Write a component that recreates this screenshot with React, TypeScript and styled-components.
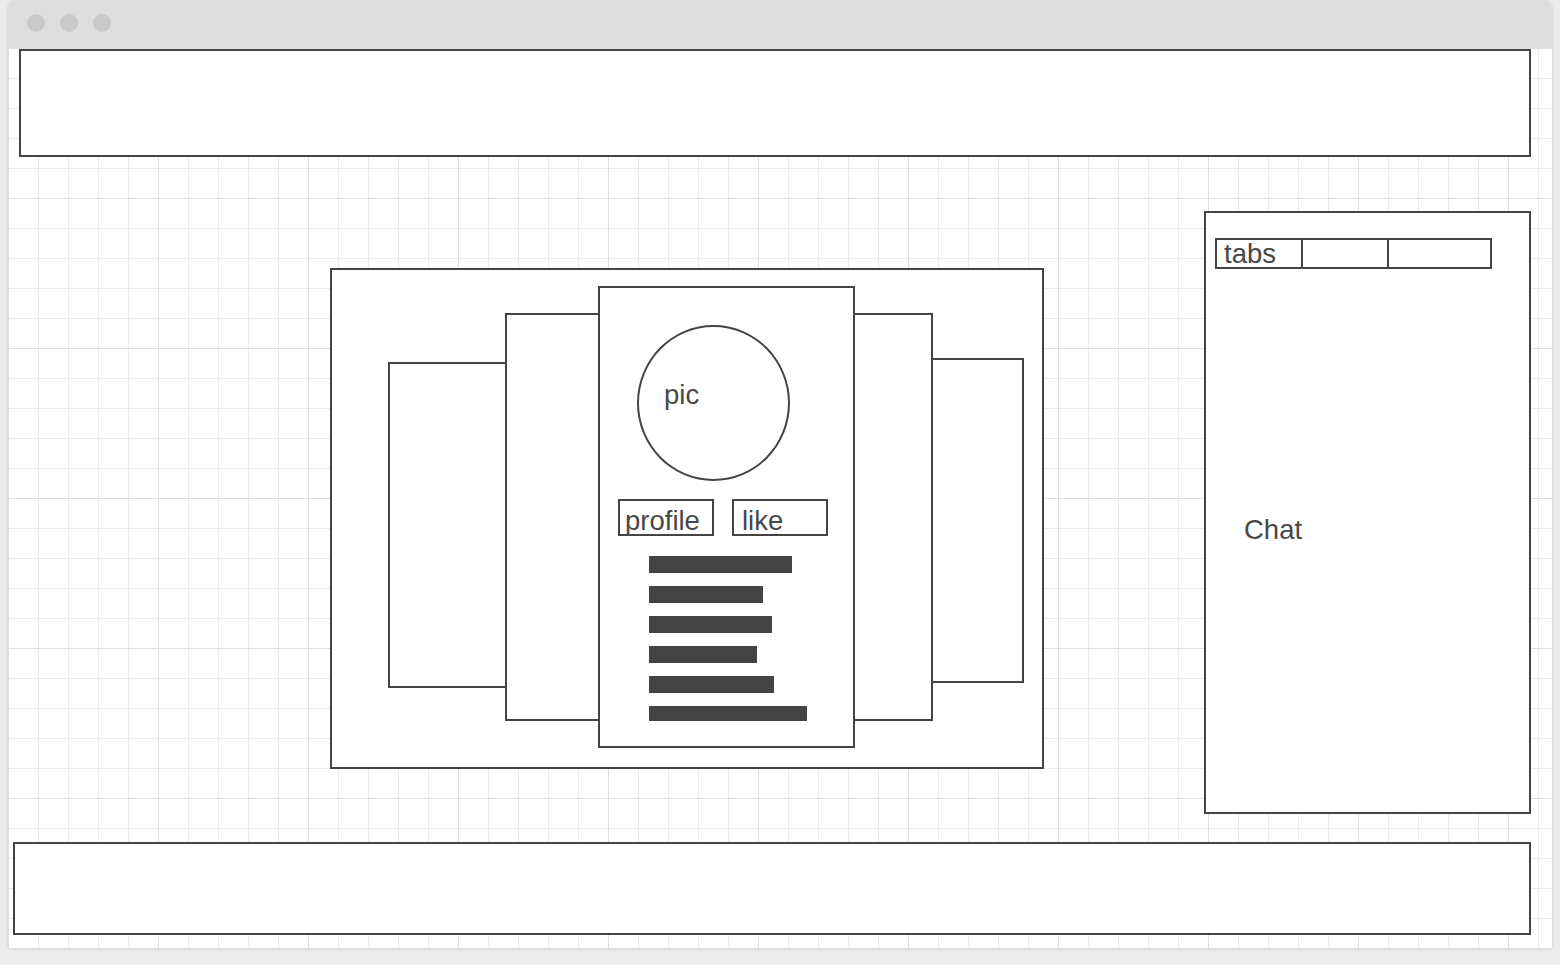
import React from "react";
import styled, { createGlobalStyle } from "styled-components";

const GlobalStyle = createGlobalStyle`
  html, body {
    margin: 0;
    padding: 0;
    background: #ececec;
    font-family: "Liberation Sans", Arial, sans-serif;
  }
  * { box-sizing: border-box; }
`;

const Page = styled.div`
  width: 1560px;
  height: 965px;
  padding-left: 8px;
  overflow: hidden;
`;

const Window = styled.div`
  width: 1544px;
  height: 949px;
  border-radius: 8px 8px 0 0;
  background: #ffffff;
  box-shadow: 0 0 3px rgba(0, 0, 0, 0.14);
  display: flex;
  flex-direction: column;
  overflow: hidden;
`;

const TitleBar = styled.div`
  height: 48px;
  flex: none;
  background: #dddddd;
  display: flex;
  align-items: center;
  gap: 15px;
  padding: 0 0 2px 19px;
`;

const Dot = styled.span`
  width: 18px;
  height: 18px;
  border-radius: 50%;
  background: #c9c9c9;
`;

const Canvas = styled.div`
  flex: 1;
  display: flex;
  flex-direction: column;
  background-color: #ffffff;
  background-image:
    linear-gradient(to right, #dedede 1px, transparent 1px),
    linear-gradient(to bottom, #dedede 1px, transparent 1px),
    linear-gradient(to right, #ebebeb 1px, transparent 1px),
    linear-gradient(to bottom, #ebebeb 1px, transparent 1px);
  background-size: 150px 150px, 150px 150px, 30px 30px, 30px 30px;
`;

const Box = styled.div`
  border: 2px solid #444444;
  background: #ffffff;
  flex: none;
`;

const Header = styled(Box)`
  width: 1512px;
  height: 108px;
  margin: 1px 0 0 11px;
`;

const Middle = styled.div`
  height: 685px;
  display: flex;
  align-items: flex-start;
  flex: none;
`;

const Carousel = styled(Box)`
  width: 714px;
  height: 501px;
  margin: 111px 0 0 322px;
  display: flex;
  align-items: flex-start;
  padding-left: 56px;
`;

const Card = styled(Box)<{ $w: number; $h: number; $top: number; $first?: boolean }>`
  width: ${(p) => p.$w}px;
  height: ${(p) => p.$h}px;
  margin-top: ${(p) => p.$top}px;
  margin-left: ${(p) => (p.$first ? 0 : -2)}px;
`;

const MainCard = styled(Card)`
  position: relative;
  z-index: 1;
  display: flex;
  flex-direction: column;
  align-items: flex-start;
  padding-top: 37px;
`;

const Label = styled.div`
  font-size: 27.5px;
  line-height: 30px;
  color: #484848;
  white-space: nowrap;
`;

const Pic = styled(Label)`
  width: 153px;
  height: 156px;
  margin-left: 37px;
  border: 2px solid #444444;
  border-radius: 50%;
  padding: 53px 0 0 25px;
`;

const ButtonRow = styled.div`
  display: flex;
  gap: 18px;
  margin: 18px 0 0 18px;
`;

const Button = styled(Label)<{ $pad: number }>`
  width: 96px;
  height: 37px;
  border: 2px solid #444444;
  padding: 5px 0 0 ${(p) => p.$pad}px;
`;

const Bars = styled.div`
  display: flex;
  flex-direction: column;
  align-items: flex-start;
  margin: 20px 0 0 49px;
`;

const Bar = styled.div<{ $w: number; $h: number }>`
  width: ${(p) => p.$w}px;
  height: ${(p) => p.$h}px;
  margin-bottom: ${(p) => 30 - p.$h}px;
  background: #444444;
`;

const ChatPanel = styled(Box)`
  width: 327px;
  height: 603px;
  margin: 54px 0 0 160px;
  display: flex;
  flex-direction: column;
  align-items: flex-start;
  padding: 25px 0 0 9px;
`;

const Tabs = styled.div`
  display: flex;
`;

const Tab = styled(Label)<{ $w: number; $first?: boolean }>`
  width: ${(p) => p.$w}px;
  height: 31px;
  margin-left: ${(p) => (p.$first ? 0 : -2)}px;
  border: 2px solid #444444;
  padding-left: 7px;
  line-height: 27px;
`;

const ChatLabel = styled(Label)`
  margin: 246px 0 0 29px;
`;

const Footer = styled(Box)`
  width: 1518px;
  height: 93px;
  margin-left: 5px;
`;

const bars: Array<[number, number]> = [
  [143, 17],
  [114, 17],
  [123, 17],
  [108, 17],
  [125, 17],
  [158, 15],
];

export default function App() {
  return (
    <>
      <GlobalStyle />
      <Page>
        <Window>
          <TitleBar>
            <Dot />
            <Dot />
            <Dot />
          </TitleBar>
          <Canvas>
            <Header />
            <Middle>
              <Carousel>
                <Card $first $w={119} $h={326} $top={92} />
                <Card $w={95} $h={408} $top={43} />
                <MainCard $w={257} $h={462} $top={16}>
                  <Pic>pic</Pic>
                  <ButtonRow>
                    <Button $pad={5}>profile</Button>
                    <Button $pad={8}>like</Button>
                  </ButtonRow>
                  <Bars>
                    {bars.map(([w, h], i) => (
                      <Bar key={i} $w={w} $h={h} />
                    ))}
                  </Bars>
                </MainCard>
                <Card $w={80} $h={408} $top={43} />
                <Card $w={93} $h={325} $top={88} />
              </Carousel>
              <ChatPanel>
                <Tabs>
                  <Tab $first $w={88}>tabs</Tab>
                  <Tab $w={88} />
                  <Tab $w={105} />
                </Tabs>
                <ChatLabel>Chat</ChatLabel>
              </ChatPanel>
            </Middle>
            <Footer />
          </Canvas>
        </Window>
      </Page>
    </>
  );
}
